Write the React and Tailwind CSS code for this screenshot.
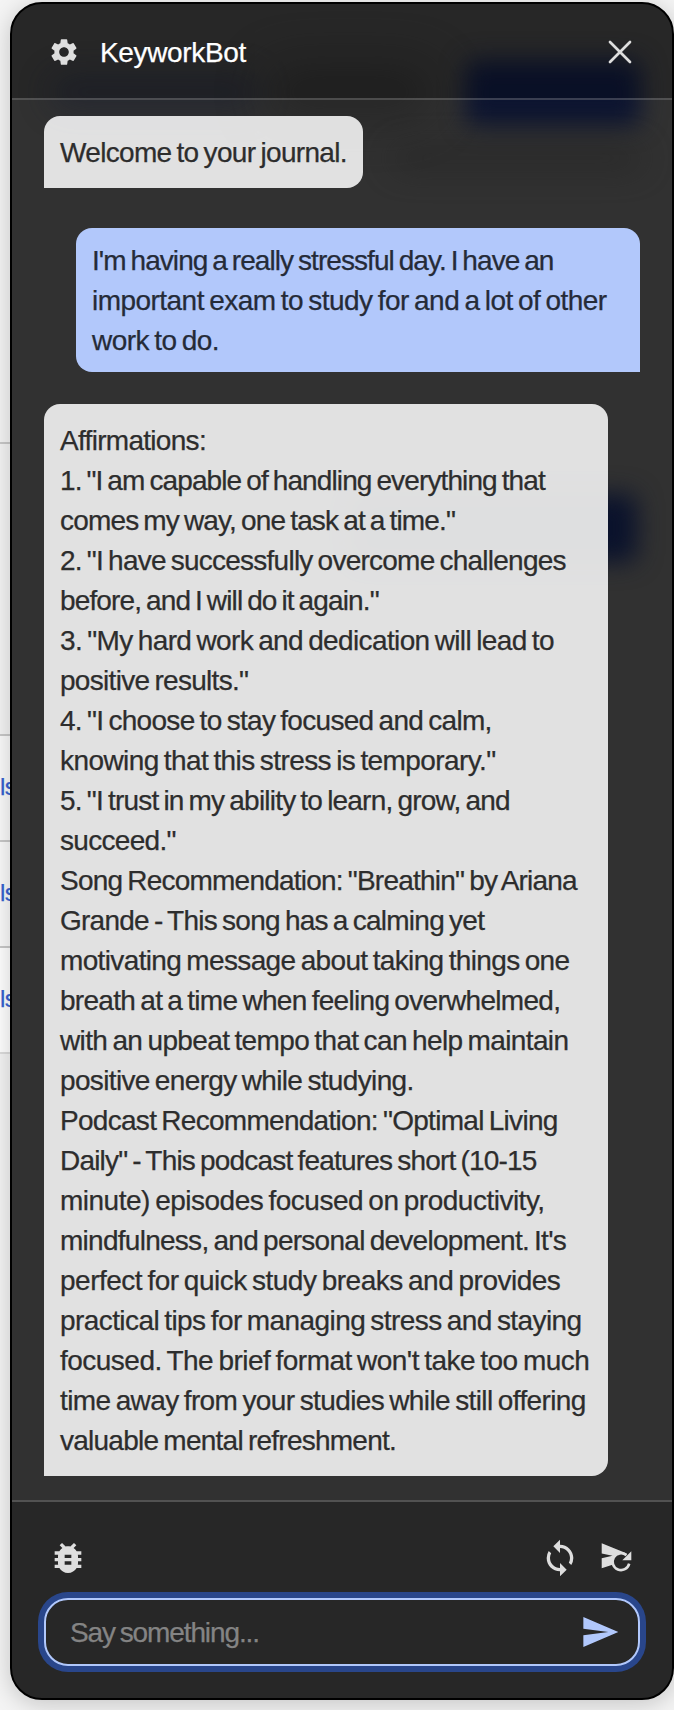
import { MdSettings, MdBugReport, MdSync, MdSend } from "react-icons/md";

// Each line carries its text and a small tracking correction in pixels.
const welcome = [["Welcome to your journal.", 0.02]];
const user = [
  ["I'm having a really stressful day. I have an", -0.23],
  ["important exam to study for and a lot of other", 0.165],
  ["work to do.", 0.16],
];
const reply = [
  ["Affirmations:", 0],
  ["1. \"I am capable of handling everything that", -0.18],
  ["comes my way, one task at a time.\"", -0.13],
  ["2. \"I have successfully overcome challenges", -0.06],
  ["before, and I will do it again.\"", -0.17],
  ["3. \"My hard work and dedication will lead to", 0.07],
  ["positive results.\"", 0],
  ["4. \"I choose to stay focused and calm,", 0],
  ["knowing that this stress is temporary.\"", 0.115],
  ["5. \"I trust in my ability to learn, grow, and", -0.09],
  ["succeed.\"", 0],
  ["Song Recommendation: \"Breathin\" by Ariana", -0.08],
  ["Grande - This song has a calming yet", -0.04],
  ["motivating message about taking things one", 0.06],
  ["breath at a time when feeling overwhelmed,", 0],
  ["with an upbeat tempo that can help maintain", 0.07],
  ["positive energy while studying.", 0.05],
  ["Podcast Recommendation: \"Optimal Living", -0.01],
  ["Daily\" - This podcast features short (10-15", -0.1],
  ["minute) episodes focused on productivity,", 0.2],
  ["mindfulness, and personal development. It's", -0.03],
  ["perfect for quick study breaks and provides", 0.2],
  ["practical tips for managing stress and staying", 0.12],
  ["focused. The brief format won't take too much", 0.18],
  ["time away from your studies while still offering", 0.09],
  ["valuable mental refreshment.", -0.05],
];

function Lines({ lines }) {
  return lines.map(([text, tracking]) => (
    <div key={text} className="whitespace-nowrap [word-spacing:-2px]" style={{ letterSpacing: `${-0.7 + tracking}px` }}>
      {text}
    </div>
  ));
}

function Backdrop() {
  return (
    <div className="absolute inset-0 overflow-hidden">
      <div className="absolute left-[38px] top-[72px] h-8 w-52 rounded-full bg-[#1b2030] opacity-60 blur-lg" />
      <div className="absolute left-[250px] top-[60px] h-14 w-44 rounded-full bg-[#1c1c1c] opacity-50 blur-xl" />
      <div className="absolute left-[453px] top-[56px] h-[66px] w-[176px] rounded-xl bg-[#0c1430] blur-[12px]" />
      <div className="absolute left-[380px] top-[144px] h-5 w-[250px] rounded-full bg-[#222222] opacity-60 blur-lg" />
      <div className="absolute left-[340px] top-[490px] h-[68px] w-[285px] rounded-xl bg-[#0a122c] blur-[12px]" />
    </div>
  );
}

function ResendIcon() {
  return (
    <svg viewBox="0 0 46 46" className="h-[46px] w-[46px]" fill="none">
      <path d="M7.7 8.3 L33 18.4 L20 29.2 L7.7 33.3 V23.2 L18.5 20.8 L7.7 18.4 Z" fill="#dedede" />
      <circle cx="27" cy="26.6" r="7.8" fill="#272727" />
      <path d="M35.2 28.6 A8.4 8.4 0 1 1 32.4 20.2" stroke="#dedede" strokeWidth="2.6" />
      <path d="M37.3 16.2 V25.2 H28.3 Z" fill="#dedede" />
    </svg>
  );
}

export default function App() {
  return (
    <div className="relative h-[1710px] w-[674px] overflow-hidden bg-[#f4f4f4] font-['Liberation_Sans',Arial,sans-serif] text-[28px] leading-10 [-webkit-text-stroke:0.25px_currentColor]">
      <div className="flex h-full flex-col pt-[442px] text-[24px] tracking-[-0.7px] text-[#3560cf]">
        <div className="h-[292px] border-t-2 border-[#c8c8c8]" />
        <div className="h-[106px] border-t-2 border-[#c8c8c8] bg-[#fafafa] pt-[31px]">ls</div>
        <div className="h-[106px] border-t-2 border-[#c8c8c8] bg-[#fafafa] pt-[31px]">ls</div>
        <div className="h-[106px] border-t-2 border-[#c8c8c8] bg-white pt-[31px]">ls</div>
        <div className="border-t-2 border-[#dcdcdc]" />
      </div>
      <div className="absolute left-[10px] top-[2px] flex h-[1698px] w-[664px] flex-col overflow-hidden rounded-[32px] border-2 border-black bg-[#313131] shadow-[0_4px_24px_rgba(0,0,0,0.2)]">
        <Backdrop />
        <header className="relative flex h-24 shrink-0 items-center border-b-2 border-white/20 bg-black/20 px-9 pt-0.5">
          <MdSettings className="size-8 text-[#dedede]" />
          <h1 className="ml-5 mt-0.5 flex-1 tracking-[-0.35px] text-white">KeyworkBot</h1>
          <svg viewBox="0 0 24 24" className="mr-1 size-6" fill="none" stroke="#dedede" strokeWidth="2.7" strokeLinecap="round">
            <path d="M2 2 22 22M22 2 2 22" />
          </svg>
        </header>
        <main className="relative flex flex-1 flex-col px-8 pt-4 text-[#2d2d2d]">
          <div className="w-[319px] rounded-2xl rounded-bl-none bg-[#ececec]/94 px-4 pt-[17px] pb-[15px]">
            <Lines lines={welcome} />
          </div>
          <div className="mt-10 w-[564px] self-end rounded-2xl rounded-br-none bg-[#b2c8fb] px-4 pt-[13px] pb-[11px] text-[#252b38]">
            <Lines lines={user} />
          </div>
          <div className="mt-8 w-[564px] rounded-2xl rounded-bl-none bg-[#ececec]/94 px-4 pt-[17px] pb-[15px]">
            <Lines lines={reply} />
          </div>
        </main>
        <footer className="relative flex h-[198px] shrink-0 flex-col border-t-2 border-white/20 bg-black/20 px-8 pt-[31px]">
          <div className="flex h-[50px] items-center pl-1 text-[#dedede]">
            <MdBugReport className="size-10" />
            <MdSync className="ml-auto size-10" />
            <div className="ml-[14px] h-[46px] w-[46px]">
              <ResendIcon />
            </div>
          </div>
          <div className="mt-[15px] flex h-[68px] items-center rounded-3xl border-2 border-[#b1c8fc] bg-[#272727] pl-6 pr-[18px] ring-6 ring-[#29468b]">
            <span className="mt-0.5 flex-1 tracking-[-1.1px] text-[#848484] [word-spacing:-2px]">Say something...</span>
            <MdSend className="size-10 text-[#b1c8fc]" />
          </div>
        </footer>
      </div>
    </div>
  );
}
